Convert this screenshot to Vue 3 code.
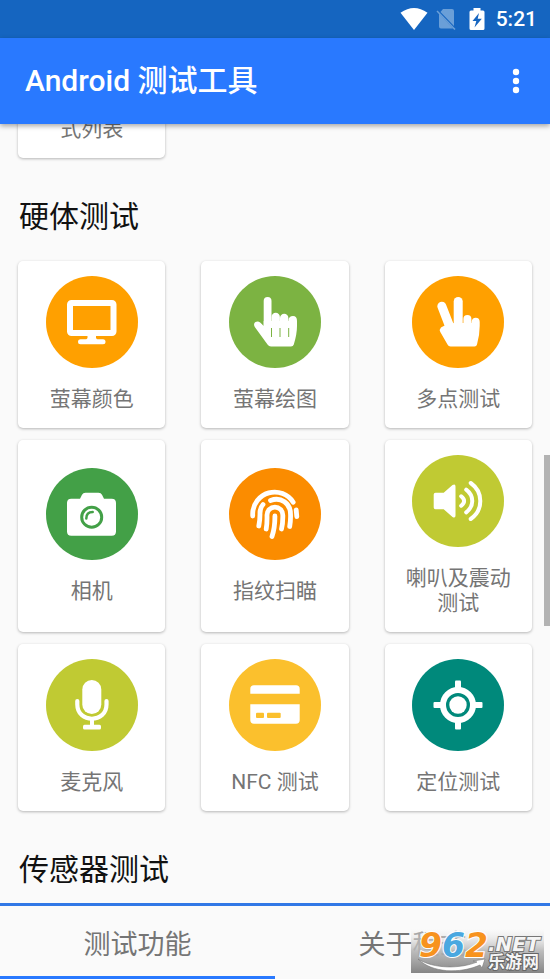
<script setup>
import { ref } from 'vue'

const tests = [
  { icon: 'monitor', label: '萤幕颜色', tone: 'amber' },
  { icon: 'point', label: '萤幕绘图', tone: 'leaf' },
  { icon: 'multi', label: '多点测试', tone: 'amber' },
  { icon: 'camera', label: '相机', tone: 'green' },
  { icon: 'finger', label: '指纹扫瞄', tone: 'orange' },
  { icon: 'speaker', label: '喇叭及震动测试', tone: 'lime' },
  { icon: 'mic', label: '麦克风', tone: 'lime' },
  { icon: 'card', label: 'NFC 测试', tone: 'yellow' },
  { icon: 'locate', label: '定位测试', tone: 'teal' }
]
const tabs = ['测试功能', '关于程式']
const active = ref(0)
</script>

<template>
  <div class="screen">
    <div class="status">
      <svg class="wifi" width="28" height="22" viewBox="0 0 28 22"><path d="M0.5 4.8Q14-4.6 27.5 4.8L14 22Z" fill="#fff" /></svg>
      <svg class="sim" width="20" height="22" viewBox="0 0 20 22">
        <path d="M7 1H16Q18 1 18 3V18L4.500 4ZM3 5.500L17 20.500H5Q3 20.500 3 18.500Z" fill="#6a9fd8" />
        <path d="M1 3L19 21.500" stroke="#6a9fd8" stroke-width="1.500" />
      </svg>
      <svg class="battery" width="16" height="22" viewBox="0 0 16 22">
        <path d="M4.500 0H11.500V2.500H14Q15.500 2.500 15.500 4V20.500Q15.500 22 14 22H2Q0.500 22 0.500 20.500V4Q0.500 2.500 2 2.500H4.500Z" fill="#fff" />
        <path d="M10 5L3.500 13H7.300L5.500 19.500L12.800 10.800H8.700Z" fill="#1565c0" />
      </svg>
      <span>5:21</span>
    </div>
    <header class="bar">
      <h1>Android 测试工具</h1>
      <button class="more" aria-label="更多">
        <svg width="8" height="26" viewBox="0 0 8 26" fill="#fff"><circle cx="4" cy="4" r="3.200" /><circle cx="4" cy="13" r="3.200" /><circle cx="4" cy="22" r="3.200" /></svg>
      </button>
    </header>

    <main class="content">
      <div class="grid">
        <button class="card tail"><span class="label">式列表</span></button>
      </div>
      <h2>硬体测试</h2>
      <div class="grid">
        <button v-for="t in tests" :key="t.label" class="card">
          <span class="disc" :class="t.tone">
            <svg viewBox="0 0 92 92" fill="#fff">
              <g v-if="t.icon === 'monitor'">
                <rect x="24" y="27" width="43.500" height="30" rx="1.500" fill="none" stroke="#fff" stroke-width="6" />
                <path d="M41.500 59H50V62L51.500 64H40L41.500 62Z" />
                <rect x="32" y="63.300" width="27.500" height="5" rx="2.500" />
              </g>
              <g v-else-if="t.icon === 'point'">
                <rect x="34.700" y="21" width="7.800" height="38" rx="3.900" />
                <rect x="42.500" y="36.700" width="8.400" height="24" rx="4.200" />
                <rect x="51" y="37.700" width="8.400" height="24" rx="4.200" />
                <path d="M59.500 44Q60 40 64 40Q68 40 68 45V50Q68 58 64.800 68.500Q64.200 70.500 62 70.500H42Q39.800 70.500 38.500 68.500L25.800 51Q24 47.700 26.500 46Q29 44.600 31.500 46.800L34.700 50V45H59.500Z" />
                <path d="M42.500 52V61M51 52V61M59.700 52V61" stroke="#7cb342" stroke-width="1" />
              </g>
              <g v-else-if="t.icon === 'multi'">
                <path d="M29.800 30.200L37.500 50" stroke="#fff" stroke-width="9" stroke-linecap="round" />
                <rect x="41.700" y="21" width="9" height="35" rx="4.500" />
                <rect x="51.400" y="39" width="8" height="20" rx="4" />
                <path d="M59.500 46Q60 41.700 63.700 41.700Q67.700 41.700 67.700 46V50Q67.700 59 65 68.500Q64.500 70.500 62.500 70.500H38.500Q36.500 70.500 35.500 68.500L28.300 56Q27 53.500 29 51.500Q31 50 34 49L42 47H59.500Z" />
              </g>
              <g v-else-if="t.icon === 'camera'">
                <path d="M21 35Q21 30.700 25.300 30.700H34L36 26.800Q37 24.700 39.500 24.700H52.500Q55 24.700 56 26.800L58 30.700H65.700Q70 30.700 70 35V63.500Q70 67.700 65.700 67.700H25.300Q21 67.700 21 63.500Z" />
                <g fill="none" stroke="#43a047"><circle cx="45.700" cy="49.200" r="10" stroke-width="3" /><path d="M40.300 50.500Q40.300 44 46.700 44" stroke-width="2.500" stroke-linecap="round" /></g>
              </g>
              <g v-else-if="t.icon === 'finger'" fill="none" stroke="#fff" stroke-width="4.800" stroke-linecap="round">
                <path d="M23.700 48V45.500A22 22 0 0 1 64.200 34.200M67.200 42L67.800 48.500" />
                <path d="M34 36.500Q30.800 40 31 46Q31 52 29.800 58M41.500 32.500C52 28.500 61.500 35.500 61.500 46Q61.800 52 60.700 58.500" />
                <path d="M37.200 61Q38.200 56 38 47A7.900 7.900 0 0 1 53.800 47Q54 55 52.500 61M45.900 48C46 56 45.500 61 43 68.500" />
              </g>
              <g v-else-if="t.icon === 'speaker'">
                <path d="M23.500 37.700H31.700L40.500 30Q43.500 28.300 43.500 31.500V60.500Q43.500 63.700 40.500 62L31.700 54.300H23.500Q21.700 54.300 21.700 52.500V39.500Q21.700 37.700 23.500 37.700Z" />
                <g fill="none" stroke="#fff" stroke-width="4" stroke-linecap="round">
                  <path d="M49.200 41.300Q55 46 49.200 50.700M54.200 34.700C62.300 41 62.300 51 54.200 57.300M58.700 28C71.500 37 71.500 55 58.700 64" />
                </g>
              </g>
              <g v-else-if="t.icon === 'mic'">
                <rect x="36.300" y="21" width="19" height="34" rx="9.500" />
                <path d="M31.300 42V45.500C31.300 64.500 60.500 64.500 60.500 45.500V42" fill="none" stroke="#fff" stroke-width="4.200" stroke-linecap="round" />
                <rect x="44" y="60" width="4" height="7" /><rect x="37" y="65.700" width="18" height="4.700" rx="1.500" />
              </g>
              <g v-else-if="t.icon === 'card'">
                <path d="M21.300 34.700V30Q21.300 26.300 25 26.300H67Q70.700 26.300 70.700 30V34.700ZM21.300 45.300H70.700V61Q70.700 64.700 67 64.700H25Q21.300 64.700 21.300 61Z" />
                <g fill="#fbc02d"><rect x="27" y="53.700" width="8" height="5.300" rx="1" /><rect x="38" y="53.700" width="13.700" height="5.300" rx="1" /></g>
              </g>
              <g v-else>
                <circle cx="46" cy="46" r="15" fill="none" stroke="#fff" stroke-width="6" /><circle cx="46" cy="46" r="8.700" />
                <rect x="43" y="21.500" width="6" height="10" rx="1" /><rect x="43" y="60.500" width="6" height="10" rx="1" />
                <rect x="21.500" y="43" width="10" height="6" rx="1" /><rect x="60.500" y="43" width="10" height="6" rx="1" />
              </g>
            </svg>
          </span>
          <span class="label">{{ t.label }}</span>
        </button>
      </div>
      <h2>传感器测试</h2>
      <div class="thumb"></div>
    </main>

    <nav class="tabs">
      <button v-for="(tab, i) in tabs" :key="tab" :class="{ active: active === i }" @click="active = i">{{ tab }}</button>
    </nav>

    <svg class="mark" width="133" height="44" viewBox="0 0 133 44">
      <defs>
        <linearGradient id="shade" x1="0" y1="0" x2="0" y2="1"><stop offset="0" stop-color="#fafafa" stop-opacity="0.300" /><stop offset="0.500" stop-color="#b5b5b5" stop-opacity="0.900" /><stop offset="1" stop-color="#858585" /></linearGradient>
      </defs>
      <rect width="133" height="44" fill="url(#shade)" />
      <g class="digits">
        <text x="8" y="28" fill="#f7931e">9</text><text x="31" y="28" fill="#4aa8e0">6</text><text x="54" y="28" fill="#f7931e">2</text>
      </g>
      <text class="net" x="77" y="22">.NET</text>
      <text class="site" x="77" y="39">乐游网</text>
      <path d="M7 30C23 40 49 40 66 33L62 32L74 30L71 39L69 36C49 45 21 44 7 30Z" fill="#fff" stroke="#777" stroke-width="0.600" />
    </svg>
  </div>
</template>

<style>
body { margin: 0; background: #fafafa; }
</style>

<style scoped>
.screen {
  position: relative;
  display: flex;
  flex-direction: column;
  height: 100vh;
  overflow: hidden;
  background: #fafafa;
  font-family: Roboto, "Noto Sans CJK SC", sans-serif;
}
button { border: 0; margin: 0; padding: 0; background: none; font: inherit; cursor: pointer; }
svg { display: block; }
.status {
  flex: none;
  display: flex;
  align-items: center;
  justify-content: flex-end;
  height: 38px;
  padding-right: 13px;
  background: #1565c0;
  color: #fff;
  font-size: 21px;
  font-weight: 500;
}
.wifi { margin-right: 8px; }
.sim { margin-right: 13px; }
.battery { margin-right: 11px; }
.bar {
  flex: none;
  position: relative;
  z-index: 1;
  display: flex;
  align-items: center;
  justify-content: space-between;
  height: 86px;
  padding: 0 20px 0 25px;
  background: #2979ff;
  color: #fff;
  box-shadow: 0 2px 5px rgba(0, 0, 0, 0.35);
}
h1 { margin: 0; font-size: 30px; line-height: 40px; font-weight: 500; }
.more { padding: 10px; }
.content {
  position: relative;
  flex: 1;
  min-height: 0;
  padding: 0 18px;
  overflow: hidden;
}
.grid { display: grid; grid-template-columns: repeat(3, 1fr); gap: 12px 36px; }
h2 { margin: 0; padding: 39px 1px 24px; font-size: 30px; line-height: 40px; font-weight: 400; color: #111; }
.card {
  display: flex;
  flex-direction: column;
  align-items: center;
  justify-content: center;
  gap: 19px;
  padding: 15px 18px 16px;
  border-radius: 5px;
  background: #fff;
  box-shadow: 0 1px 3px rgba(0, 0, 0, 0.28);
  color: #757575;
}
.tail { margin-top: -7px; padding-top: 0; }
.label { font-size: 21px; line-height: 25px; text-align: center; }
.disc { width: 92px; height: 92px; border-radius: 50%; }
.amber { background: #ffa000; }
.leaf { background: #7cb342; }
.green { background: #43a047; }
.orange { background: #fb8c00; }
.lime { background: #c0ca33; }
.yellow { background: #fbc02d; }
.teal { background: #00897b; }
.thumb { position: absolute; right: 0; top: 331px; width: 6px; height: 171px; background: #b3b3b3; }
.tabs {
  flex: none;
  box-sizing: border-box;
  display: grid;
  grid-template-columns: 1fr 1fr;
  height: 76px;
  border-top: 3px solid #3178e6;
}
.tabs button { padding-top: 2px; border-bottom: 3px solid transparent; font-size: 27px; color: #757575; }
.tabs .active { border-bottom-color: #2979ff; }
.mark { position: absolute; right: 6px; bottom: 6px; }
.digits { font: italic bold 33px "DejaVu Sans", sans-serif; stroke: #fff; stroke-width: 2px; paint-order: stroke; }
.net { font: italic bold 20px "DejaVu Sans", sans-serif; fill: #f5f5f5; stroke: #777; stroke-width: 2px; paint-order: stroke; }
.site { font: bold 17px "Noto Sans CJK SC", sans-serif; fill: #f5f5f5; stroke: #666; stroke-width: 2px; paint-order: stroke; }
</style>
